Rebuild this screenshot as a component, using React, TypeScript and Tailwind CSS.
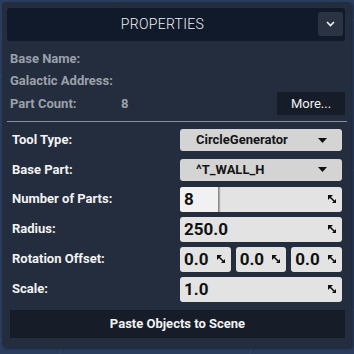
import React from "react";

const Resize = () => (
  <svg width="8" height="8" viewBox="0 0 8 8" className="shrink-0">
    <polygon points="0,0 5,0 0,5" fill="#111" />
    <polygon points="8,8 4,8 8,4" fill="#111" />
    <line x1="1" y1="1" x2="7" y2="7" stroke="#111" strokeWidth="1.6" />
  </svg>
);

const Caret = () => (
  <svg width="9" height="5" viewBox="0 0 9 5" className="shrink-0">
    <polygon points="0,0 9,0 4.5,5" fill="#111" />
  </svg>
);

function Dropdown({ text }: { text: string }) {
  return (
    <div className="flex h-[22px] w-[162px] items-center justify-between rounded-[3px] bg-[#d4d4d4] pl-[16px] pr-[15px] text-[13px] font-bold text-[#151515]">
      <span>{text}</span>
      <Caret />
    </div>
  );
}

function NumInput({ value, fill }: { value: string; fill?: boolean }) {
  return (
    <div className="relative flex h-[25px] w-full items-center justify-between overflow-hidden rounded-[3px] bg-[#e3e3e3] pl-[4px] pr-[6px]">
      {fill && (
        <div className="absolute left-0 top-0 h-full w-[39px] border-r border-[#8a8a8a] bg-[#f1f1f1] shadow-[1px_0_1px_rgba(0,0,0,0.25)]" />
      )}
      <span className="relative text-[17px] font-bold leading-none text-[#111]">{value}</span>
      <span className="relative">
        <Resize />
      </span>
    </div>
  );
}

function Row({ label, children, h = "h-[30px]" }: { label: string; children: React.ReactNode; h?: string }) {
  return (
    <div className={`flex ${h} items-center`}>
      <div className="w-[173px] pl-[5px] text-[13px] font-bold text-[#f2f2f2]">{label}</div>
      {children}
    </div>
  );
}

export default function App() {
  return (
    <div
      className="relative h-[354px] w-[354px] overflow-hidden bg-[#2b3d5f]"
      style={{ fontFamily: "Roboto, 'Liberation Sans', sans-serif" }}
    >
      <svg className="absolute inset-0" width="354" height="354" viewBox="0 0 354 354">
        <g stroke="#3a4c6c" strokeWidth="1" opacity="0.7">
          <line x1="0" y1="76" x2="354" y2="20" />
          <line x1="0" y1="250" x2="354" y2="170" />
          <line x1="330" y1="0" x2="250" y2="354" />
          <line x1="0" y1="340" x2="354" y2="310" />
          <line x1="60" y1="354" x2="120" y2="0" />
        </g>
      </svg>
      <div className="relative ml-[2px] mt-[2px] flex h-[345px] w-[349px] flex-col rounded-[3px] bg-[#232d3e] pl-[5px] pr-[6px] pt-[6px] shadow-[2px_2px_3px_rgba(0,0,0,0.35)]">
        <div className="relative flex h-[33px] items-center rounded-[3px] bg-[#111a2a]">
          <div className="flex-1 pr-[27px] text-center text-[14px] font-light tracking-[0.3px] text-[#eef0f3]">
            PROPERTIES
          </div>
          <div className="absolute right-[2px] top-[4px] flex h-[24px] w-[25px] items-center justify-center rounded-[3px] bg-[#2b3342]">
            <svg width="9" height="6" viewBox="0 0 9 6">
              <polyline points="1,1 4.5,4.5 8,1" fill="none" stroke="#f0f0f0" strokeWidth="1.6" />
            </svg>
          </div>
        </div>

        <div className="mt-[7px] flex flex-col text-[13px] font-bold text-[#9ba1aa]">
          <div className="flex h-[22px] items-center pl-[3px]">Base Name:</div>
          <div className="flex h-[22px] items-center pl-[3px]">Galactic Address:</div>
          <div className="flex h-[23px] items-center pl-[3px]">
            <span className="w-[111px]">Part Count:</span>
            <span>8</span>
            <div className="ml-auto flex h-[23px] w-[68px] items-center justify-center bg-[#161d29] text-[13px] font-normal text-[#f2f2f2]">
              More...
            </div>
          </div>
        </div>

        <div className="mt-[6px] h-[1px] w-[340px] bg-[#8a909a]" />

        <div className="mt-[3px] flex flex-col">
          <Row label="Tool Type:">
            <Dropdown text="CircleGenerator" />
          </Row>
          <Row label="Base Part:" h="h-[29px]">
            <Dropdown text="^T_WALL_H" />
          </Row>
          <Row label="Number of Parts:">
            <div className="w-[162px]">
              <NumInput value="8" fill />
            </div>
          </Row>
          <Row label="Radius:">
            <div className="w-[162px]">
              <NumInput value="250.0" />
            </div>
          </Row>
          <Row label="Rotation Offset:">
            <div className="grid w-[162px] grid-cols-3 gap-[5px]">
              <NumInput value="0.0" />
              <NumInput value="0.0" />
              <NumInput value="0.0" />
            </div>
          </Row>
          <Row label="Scale:">
            <div className="w-[162px]">
              <NumInput value="1.0" />
            </div>
          </Row>
        </div>

        <div className="ml-[3px] mt-[6px] flex h-[28px] w-[335px] items-center justify-center bg-[#161d29] text-[13px] font-bold text-[#f2f2f2]">
          Paste Objects to Scene
        </div>
      </div>
    </div>
  );
}
